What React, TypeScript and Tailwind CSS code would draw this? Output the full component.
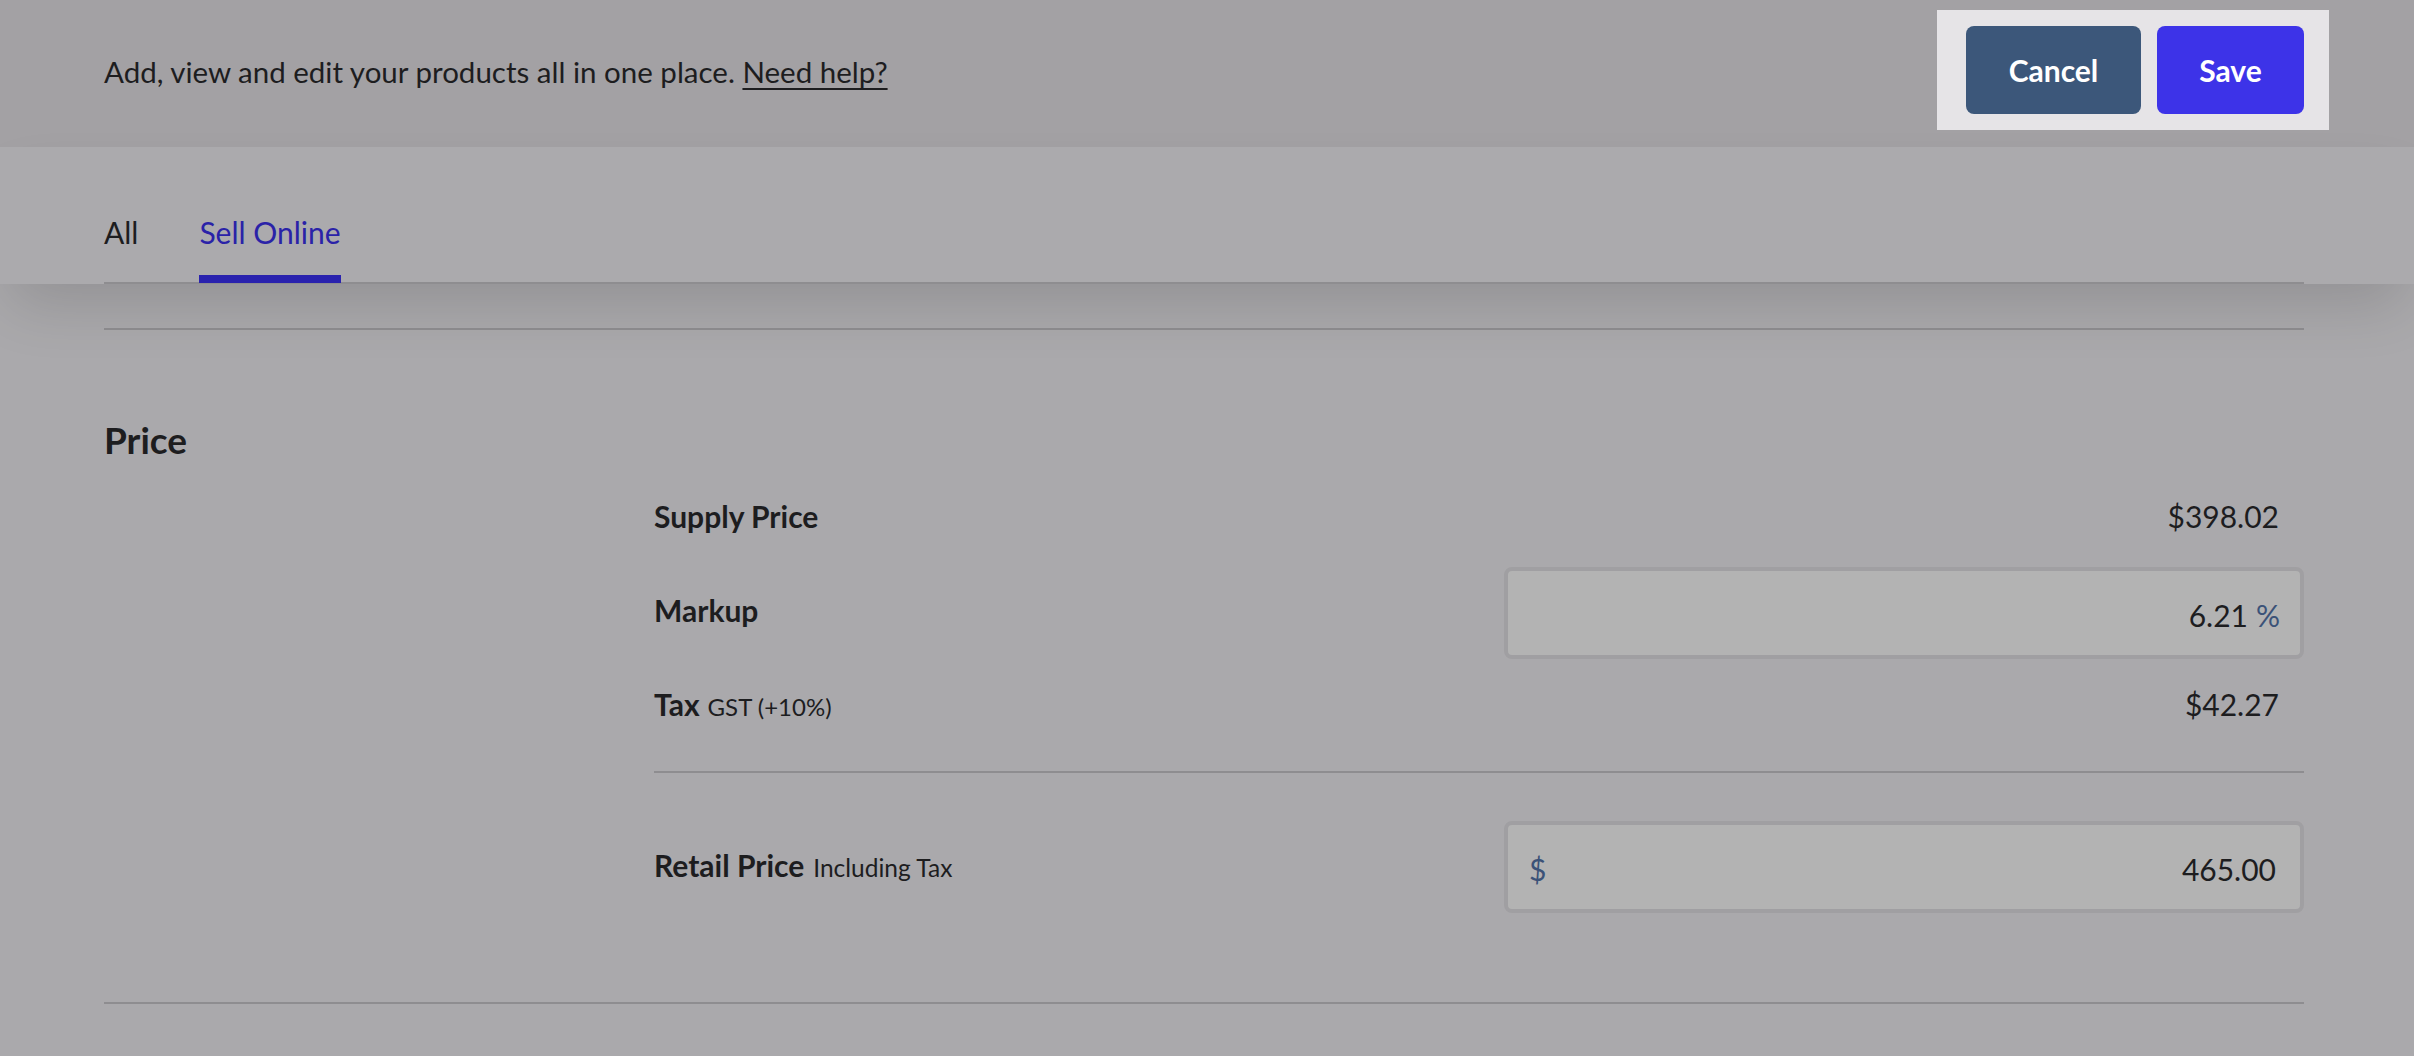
import React from "react";

export default function App() {
  return (
    <div className="min-h-[1056px] w-full bg-[#aaa9ac] text-[#1d1d1f]" style={{ fontFamily: "Lato, 'Noto Sans', sans-serif" }}>
      {/* Header */}
      <div className="flex h-[147px] items-start justify-between bg-[#a3a1a4] pl-[104px] pr-[110px]">
        <p className="mt-[55px] text-[29.5px] leading-[34px] text-[#1d1d1f]">
          Add, view and edit your products all in one place.{" "}
          <span className="underline decoration-2 underline-offset-[5px]">Need help?</span>
        </p>
        <div className="-mr-[25px] mt-[10px] flex gap-4 bg-[#e6e4e7] py-4 pl-[29px] pr-[25px]">
          <button className="h-[88px] w-[175px] rounded-lg bg-[#3c577a] text-[30px] font-bold text-white">
            Cancel
          </button>
          <button className="h-[88px] w-[147px] rounded-lg bg-[#3d33e8] text-[30px] font-bold text-white">
            Save
          </button>
        </div>
      </div>

      {/* Tabs */}
      <div className="relative z-10 bg-[#abaaad] pl-[104px] pr-[110px] shadow-[0_30px_60px_-10px_rgba(0,0,0,0.14)]">
        <div className="flex h-[137px] items-end gap-[61px] border-b-2 border-[#8e8d90]">
          <div className="-mb-[1px] border-b-[8px] border-transparent pb-[26px] text-[30px] leading-[34px] text-[#1d1d1f]">
            All
          </div>
          <div className="-mb-[1px] border-b-[8px] border-[#2a22ae] pb-[26px] text-[30px] leading-[34px] text-[#2a22a8]">
            Sell Online
          </div>
        </div>
      </div>

      {/* Content */}
      <div className="pl-[104px] pr-[110px]">
        <div className="mt-[44px] border-t-2 border-[#8e8d90] pt-[88px]">
          <h2 className="text-[37px] font-bold leading-[43px]">Price</h2>

          <div className="ml-[550px] mt-[24px] flex flex-col">
            <div className="flex h-[60px] items-center justify-between pt-[2px] pr-[25px]">
              <span className="text-[30px] font-bold">Supply Price</span>
              <span className="text-[30px]">$398.02</span>
            </div>

            <div className="mt-[22px] flex h-[92px] items-center justify-between">
              <span className="-mt-[6px] text-[30px] font-bold">Markup</span>
              <div className="flex h-[92px] w-[800px] items-center justify-end rounded-lg border-4 border-[#a09fa2] bg-[#b3b3b3] pr-[20px] pt-[4px]">
                <span className="text-[30px]">6.21</span>
                <span className="ml-[8px] text-[30px] text-[#3b5278]">%</span>
              </div>
            </div>

            <div className="mt-[15px] flex h-[60px] items-center justify-between pr-[25px]">
              <span className="flex items-baseline">
                <span className="text-[30px] font-bold">Tax</span>
                <span className="ml-[8px] text-[24px]">GST (+10%)</span>
              </span>
              <span className="text-[30px]">$42.27</span>
            </div>

            <div className="mt-[37px] h-[2px] bg-[#8e8d90]" />

            <div className="mt-[48px] flex h-[92px] items-center justify-between">
              <span className="-mt-[4px] flex items-baseline">
                <span className="text-[30px] font-bold">Retail Price</span>
                <span className="ml-[9px] text-[24.5px]">Including Tax</span>
              </span>
              <div className="flex h-[92px] w-[800px] items-center justify-between rounded-lg border-4 border-[#a09fa2] bg-[#b3b3b3] pl-[21px] pr-[24px] pt-[4px]">
                <span className="text-[30px] text-[#3b5278]">$</span>
                <span className="text-[30px]">465.00</span>
              </div>
            </div>
          </div>

          <div className="mt-[89px] h-[2px] bg-[#8e8d90]" />
        </div>
      </div>
    </div>
  );
}
